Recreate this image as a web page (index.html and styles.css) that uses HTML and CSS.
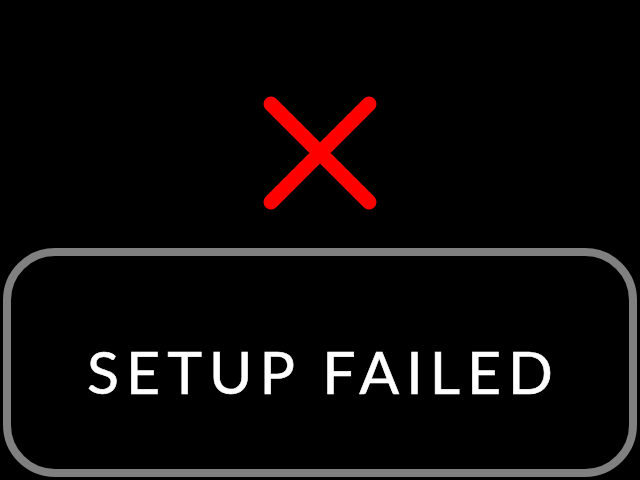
FILE: index.html
```html
<!DOCTYPE html>
<html lang="en">
<head>
    <meta charset="UTF-8">
    <title>Setup</title>
    <link rel="stylesheet" href="styles.css">
</head>
<body>
    <div class="screen">
        <svg class="status-icon" width="120" height="120" viewBox="0 0 120 120">
            <path d="M11 11 L109 109 M109 11 L11 109" stroke="#ff0000" stroke-width="15" stroke-linecap="round" fill="none"/>
        </svg>
        <div class="message-box">
            <span class="message">SETUP FAILED</span>
        </div>
    </div>
</body>
</html>
```

FILE: styles.css
```css
html, body { margin: 0; padding: 0; background: #000; }
.screen { width: 640px; height: 480px; display: flex; flex-direction: column; align-items: center; }
.status-icon { display: block; margin-top: 93px; }
.message-box {
    box-sizing: border-box; width: 634px; height: 229px; margin-top: 35px;
    border: 8px solid #808080; border-radius: 52px;
    display: flex; align-items: center; justify-content: center; padding-top: 18px;
}
/* trailing letter-spacing is balanced by the left padding */
.message {
    color: #fff; font-family: Lato, sans-serif; font-size: 59px;
    letter-spacing: 7px; padding-left: 7px;
    -webkit-text-stroke: 0.6px #fff;
}
```
